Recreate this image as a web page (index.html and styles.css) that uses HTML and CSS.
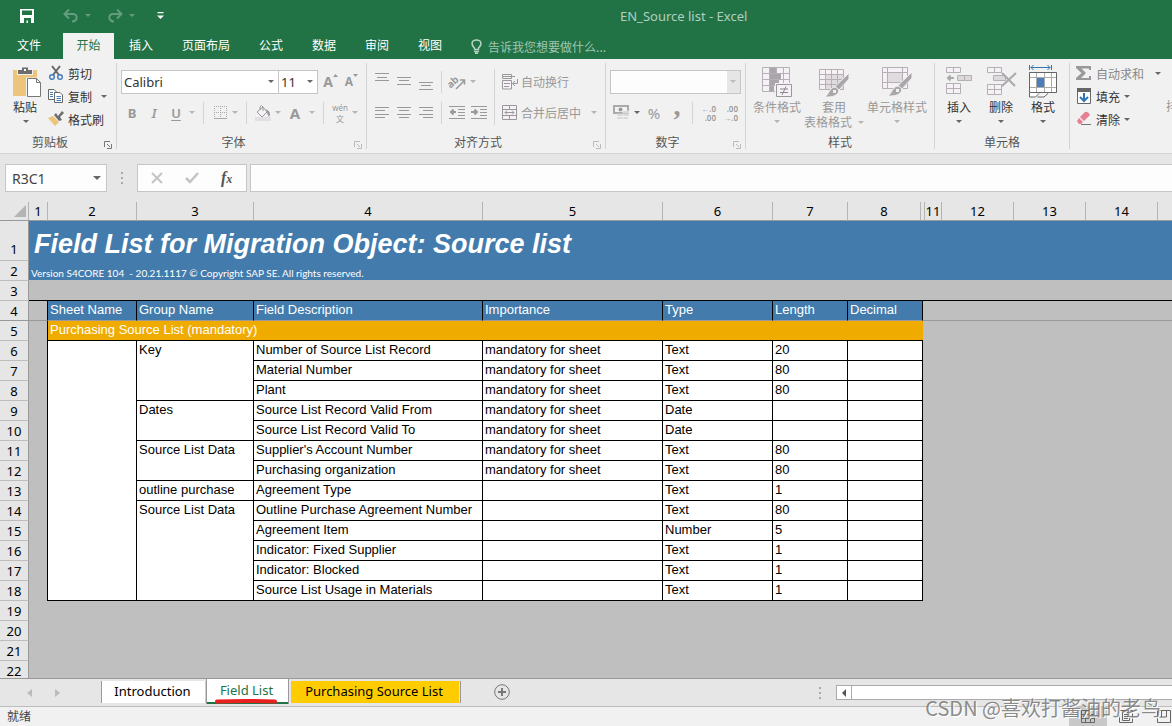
FILE: index.html
```html
<!DOCTYPE html>
<html lang="zh-CN">
<head>
<meta charset="utf-8">
<title>EN_Source list - Excel</title>
<link rel="stylesheet" href="styles.css">
</head>
<body>
<div class="app">
  <header class="top">
    <div class="titlebar">
      <div class="quick">
        <button class="qbtn" aria-label="保存"><svg width="14" height="14" viewBox="0 0 14 14"><path fill="#fff" fill-rule="evenodd" d="M0 0H14V14H0ZM2 1.500V6H12V1.500ZM4 9H11V14H8V11.500H6.500V14H4Z"/></svg></button>
        <button class="qbtn faded" aria-label="撤消"><svg width="16" height="14" viewBox="0 0 16 14" fill="none" stroke="#fff" stroke-width="2"><path d="M6 0.500L1.500 5L6 9.500M2 5H10C15 5 15 12 9 12.500"/></svg><i class="arr white"></i></button>
        <button class="qbtn faded redo" aria-label="恢复"><svg width="16" height="14" viewBox="0 0 16 14" fill="none" stroke="#fff" stroke-width="2"><path d="M10 0.500L14.500 5L10 9.500M14 5H6C1 5 1 12 7 12.500"/></svg><i class="arr white"></i></button>
        <button class="qbtn custom" aria-label="自定义快速访问工具栏"><svg width="7" height="8" viewBox="0 0 7 8"><path fill="#fff" d="M0.500 0H6.500V1.300H0.500ZM0 3.500H7L3.500 7Z"/></svg></button>
      </div>
      <div class="doc">EN_Source list - Excel</div>
    </div>
    <nav class="tabs">
      <button class="tab file">文件</button><button class="tab on">开始</button><button class="tab">插入</button><button class="tab">页面布局</button><button class="tab">公式</button><button class="tab">数据</button><button class="tab">审阅</button><button class="tab">视图</button>
      <button class="tell"><svg width="11" height="15" viewBox="0 0 11 15" fill="none" stroke="#b5d3c1" stroke-width="1.500"><path d="M3.500 10.500V9C0 6 0 1 5.500 1S11 6 7.500 9V10.500Z"/><path d="M3 12.500H8M4 14.200H7"/></svg>告诉我您想要做什么...</button>
    </nav>
  </header>

  <section class="ribbon">
    <div class="group clip">
      <div class="gbody">
        <button class="big paste"><svg width="29" height="31" viewBox="0 0 29 31"><path fill="#ecc47c" d="M0 3H24V29H0Z"/><path fill="#f1f1f1" d="M4 3H20V8H4Z"/><path fill="#6d6d6d" d="M5 3H9V0.500H15V3H19V7H5Z"/><path fill="#fff" d="M11 2H13V4H11Z"/><path fill="#fff" stroke="#f1f1f1" stroke-width="3" d="M14.500 12H23L27.500 16.500V30H14.500Z"/><path fill="#fff" stroke="#777" d="M14.500 11.500H23.500L27.500 15.500V29.500H14.500ZM23.500 11.500V15.500H27.500"/></svg><span>粘贴</span><i class="arr"></i></button>
        <div class="stack">
          <button class="line"><svg width="16" height="16" viewBox="0 0 16 16" fill="none"><path stroke="#666" stroke-width="2" d="M4 1L11 10M12 1L5 10"/><circle cx="4" cy="12" r="2.300" stroke="#4a7ebb" stroke-width="1.500"/><circle cx="12" cy="12" r="2.300" stroke="#4a7ebb" stroke-width="1.500"/></svg>剪切</button>
          <button class="line"><svg width="16" height="16" viewBox="0 0 16 16" fill="#fff" stroke="#666"><path d="M0.500 1.500H6L8.500 4V11.500H0.500Z"/><path d="M6.500 4.500H12L14.500 7V14.500H6.500Z"/><path stroke="#4a7ebb" d="M2 4.500H5M2 6.500H5M2 8.500H5M8.500 8.500H13M8.500 10.500H13M8.500 12.500H13"/></svg>复制<i class="arr wide"></i></button>
          <button class="line"><svg width="16" height="16" viewBox="0 0 16 16"><path fill="#ecc47c" d="M0 7L5 5L11 11L7 15Z"/><path fill="#6d6d6d" d="M6 4L8 2L10 5L14 0L16 2L12 6L14 9L11 10Z"/></svg>格式刷</button>
        </div>
      </div>
      <div class="glabel">剪贴板<svg class="launch dark" width="8" height="8" viewBox="0 0 8 8"><path d="M0.500 6V0.500H6M3 3L6 6M7.500 3V7.500H3" fill="none" stroke="currentColor"/></svg></div>
    </div>

    <div class="group font">
      <div class="gbody rows">
        <div class="row"><span class="combo w158"><select aria-label="字体"><option>Calibri</option></select><i class="arr"></i></span><span class="combo w40"><select aria-label="字号"><option>11</option></select><i class="arr"></i></span><button class="slot grow" aria-label="增大字号"><b>A</b><svg width="5" height="3" viewBox="0 0 5 3"><path fill="#999" d="M0 3L2.500 0L5 3Z"/></svg></button><button class="slot shrink" aria-label="减小字号"><b>A</b><svg width="5" height="3" viewBox="0 0 5 3"><path fill="#999" d="M0 0H5L2.500 3Z"/></svg></button></div>
        <div class="row dim"><button class="slot s22"><b>B</b></button><button class="slot s22"><em>I</em></button><button class="slot s22"><u>U</u></button><i class="arr cell"></i><span class="sep"></span><button class="slot s20" aria-label="边框"><svg width="13" height="13" viewBox="0 0 13 13" stroke="#aaa"><path stroke-dasharray="1 1" d="M0 0.500H13M0 6.500H13M0.500 0V12M6.500 0V12M12.500 0V12"/><path d="M0 12.500H13"/></svg></button><i class="arr cell"></i><span class="sep"></span><button class="slot s20" aria-label="填充颜色"><svg width="16" height="16" viewBox="0 0 16 16"><path fill="#e4dfe4" d="M0 12H16V16H0Z"/><path fill="#f6f1f6" stroke="#999" d="M2 7L8 2L12 7L7 12Z"/><path fill="none" stroke="#999" d="M5 5V2Q6.500-1 8 2V6"/><path fill="#999" d="M11 4Q17 7 14 12Q12 9 12 7Z"/></svg></button><i class="arr cell"></i><button class="slot s24 fc"><b>A</b></button><i class="arr cell"></i><span class="sep"></span><button class="slot s20 pinyin"><span>wén</span><span>文</span></button><i class="arr cell"></i></div>
      </div>
      <div class="glabel">字体<svg class="launch" width="8" height="8" viewBox="0 0 8 8"><path d="M0.500 6V0.500H6M3 3L6 6M7.500 3V7.500H3" fill="none" stroke="currentColor"/></svg></div>
    </div>

    <div class="group align">
      <div class="gbody">
        <div class="rows">
          <div class="row dim"><button class="slot s22" aria-label="顶端对齐"><svg width="14" height="18" viewBox="0 0 14 18" stroke="#999"><path d="M0 0.500H14M2 4.500H12M0 7.500H14"/></svg></button><button class="slot s22" aria-label="垂直居中"><svg width="14" height="18" viewBox="0 0 14 18" stroke="#999"><path d="M0 4.500H14M2 7.500H12M0 11.500H14"/></svg></button><button class="slot s22" aria-label="底端对齐"><svg width="14" height="18" viewBox="0 0 14 18" stroke="#999"><path d="M0 9.500H14M2 12.500H12M0 16.500H14"/></svg></button><span class="sep near"></span><button class="slot s22" aria-label="方向"><svg width="17" height="16" viewBox="0 0 17 16"><text class="abtext" x="-2" y="10" transform="rotate(-42 6 8)">ab</text><path fill="none" stroke="#999" stroke-width="1.500" d="M7 15L15 7M11 6H15.500V10.500"/></svg></button><i class="arr cell"></i></div>
          <div class="row dim"><button class="slot s22" aria-label="左对齐"><svg width="14" height="12" viewBox="0 0 14 12" stroke="#999"><path d="M0 0.500H14M0 3.500H10M0 7.500H14M0 10.500H10"/></svg></button><button class="slot s22" aria-label="居中"><svg width="14" height="12" viewBox="0 0 14 12" stroke="#999"><path d="M0 0.500H14M2 3.500H12M0 7.500H14M2 10.500H12"/></svg></button><button class="slot s22" aria-label="右对齐"><svg width="14" height="12" viewBox="0 0 14 12" stroke="#999"><path d="M0 0.500H14M4 3.500H14M0 7.500H14M4 10.500H14"/></svg></button><span class="sep near"></span><button class="slot s22" aria-label="减少缩进量"><svg width="16" height="14" viewBox="0 0 16 14" fill="none" stroke="#999"><path d="M0 0.500H16M9 3.500H16M9 6.500H16M9 9.500H16M0 12.500H16"/><path stroke-width="2" d="M7 6H2M4.500 3.500L2 6L4.500 8.500"/></svg></button><button class="slot s22" aria-label="增加缩进量"><svg width="16" height="14" viewBox="0 0 16 14" fill="none" stroke="#999"><path d="M0 0.500H16M9 3.500H16M9 6.500H16M9 9.500H16M0 12.500H16"/><path stroke-width="2" d="M0 6H6M3.500 3.500L6 6L3.500 8.500"/></svg></button></div>
        </div>
        <span class="sep tall"></span>
        <div class="rows">
          <div class="row dim"><button class="line"><svg width="16" height="16" viewBox="0 0 16 16" fill="#f6f1f6" stroke="#999"><path d="M0.500 0.500H9.500V4.500H0.500ZM0.500 6.500H9.500V15H0.500ZM0 2.500H13M2 9.500H8M2 12.500H7"/><path fill="none" d="M15.500 5V9.500H11M13 7L10.500 9.500L13 12"/></svg>自动换行</button></div>
          <div class="row dim"><button class="line"><svg width="16" height="16" viewBox="0 0 16 16" fill="#f6f1f6" stroke="#999"><path d="M0.500 0.500H14.500V14.500H0.500ZM0.500 4.500H14.500M0.500 10.500H14.500M7.500 0V4M7.500 11V15"/><path fill="none" d="M3 7.500H12M5 5.500L3 7.500L5 9.500M10 5.500L12 7.500L10 9.500"/></svg>合并后居中<i class="arr wide far"></i></button></div>
        </div>
      </div>
      <div class="glabel">对齐方式<svg class="launch" width="8" height="8" viewBox="0 0 8 8"><path d="M0.500 6V0.500H6M3 3L6 6M7.500 3V7.500H3" fill="none" stroke="currentColor"/></svg></div>
    </div>

    <div class="group number">
      <div class="gbody rows">
        <div class="row"><span class="combo w131 off"><select aria-label="数字格式"><option></option></select><i class="arr"></i></span></div>
        <div class="row dim"><button class="slot s22" aria-label="会计数字格式"><svg width="16" height="16" viewBox="0 0 16 16"><path fill="#f6f1f6" stroke="#aaa" stroke-width="2" d="M1 1H15V8H1Z"/><circle cx="7.500" cy="4.500" r="2" fill="#999"/><path fill="#d4d0d4" stroke="#f1f1f1" stroke-width=".5" d="M10 6H16V8H10ZM10 9H16V11H10ZM4 9H10V11H4ZM4 12H10V14H4ZM10 12H15V14H10Z"/></svg></button><i class="arr cell deep"></i><button class="slot s24 pct">%</button><button class="slot s22 comma">,</button><span class="sep near"></span><button class="slot s22 dec"><span>←.0</span><span>.00</span></button><button class="slot s22 dec"><span>.00</span><span>→.0</span></button></div>
      </div>
      <div class="glabel">数字<svg class="launch" width="8" height="8" viewBox="0 0 8 8"><path d="M0.500 6V0.500H6M3 3L6 6M7.500 3V7.500H3" fill="none" stroke="currentColor"/></svg></div>
    </div>

    <div class="group styles">
      <div class="gbody dim">
        <button class="big w54"><svg width="30" height="31" viewBox="0 0 30 31" fill="#f6f1f6" stroke="#b4b0b4"><path d="M0.500 0.500H27.500V24.500H0.500ZM0.500 6.500H27.500M0.500 12.500H27.500M0.500 18.500H27.500M7.500 0V25M14.500 0V25M21.500 0V25"/><path fill="#aaa5aa" stroke="none" d="M8 1H14V6H8ZM8 7H19V12H8ZM8 13H17V18H8ZM8 19H12V24H8Z"/><path stroke="#f1f1f1" stroke-width="3" d="M14.500 17.500H29.500V29.500H14.500Z"/><path stroke="#999" d="M14.500 17.500H29.500V29.500H14.500Z"/><path stroke="#888" d="M18 22H26M18 25.500H26M24 19.500L20 28"/></svg><span>条件格式</span><i class="arr"></i></button>
        <button class="big w60"><svg width="30" height="31" viewBox="0 0 30 31" fill="#f6f1f6" stroke="#b4b0b4"><path d="M0.500 2.500H24.500V22.500H0.500Z"/><path fill="#dfdbdf" d="M6.500 7.500H24.500V22.500H6.500Z"/><path d="M0.500 7.500H24.500M0.500 12.500H24.500M0.500 17.500H24.500M6.500 2V22M12.500 2V22M18.500 2V22"/><path fill="#aaa6aa" stroke="#f1f1f1" d="M30 6V12L20 23L16 19.500Z"/><path fill="#aaa6aa" stroke="#f1f1f1" d="M15 20C18 20 21 23 19 26C16 30 11 30 6 30C10 27 10 22 15 20Z"/><path fill="#f1f1f1" stroke="none" d="M14 23H17V26H14Z"/></svg><span>套用<br>表格格式<i class="arr inline"></i></span></button>
        <button class="big w64"><svg width="30" height="31" viewBox="0 0 30 31" fill="#f6f1f6" stroke="#b4b0b4"><path d="M0.500 0.500H25.500V21.500H0.500ZM0.500 5.500H25.500M0.500 15.500H25.500M5.500 0V22M20.500 0V22"/><path fill="#dfdbdf" d="M5.500 5.500H20.500V15.500H5.500Z"/><path fill="#aaa6aa" stroke="#f1f1f1" d="M30 5V11L20 22L16 18.500Z"/><path fill="#aaa6aa" stroke="#f1f1f1" d="M15 19C18 19 21 22 19 25C16 29 11 29 6 29C10 26 10 21 15 19Z"/><path fill="#f1f1f1" stroke="none" d="M14 22H17V25H14Z"/></svg><span>单元格样式</span><i class="arr"></i></button>
      </div>
      <div class="glabel">样式</div>
    </div>

    <div class="group cells">
      <div class="gbody">
        <button class="big w42"><svg width="26" height="31" viewBox="0 0 26 31" fill="#f6f1f6" stroke="#b4b0b4"><path d="M0.500 0.500H14.500V5.500H0.500ZM7.500 0V6M0.500 16.500H14.500V26.500H0.500ZM0.500 21.500H14.500M7.500 16V27"/><path fill="#dcd8dc" d="M11.500 8.500H25.500V13.500H11.500ZM18.500 8V14"/><path fill="none" stroke="#aaa" stroke-width="2" d="M8 11H2M4.500 8.500L2 11L4.500 13.500"/></svg><span>插入</span><i class="arr"></i></button>
        <button class="big w42"><svg width="28" height="31" viewBox="0 0 28 31" fill="#f6f1f6" stroke="#b4b0b4"><path d="M0.500 0.500H14.500V5.500H0.500ZM7.500 0V6M0.500 17.500H14.500V27.500H0.500ZM0.500 22.500H14.500M7.500 17V28"/><path fill="#dcd8dc" d="M6.500 8.500H18.500V13.500H6.500Z"/><path fill="none" stroke="#aaa" stroke-width="2" d="M15 6L28 19M29 6L15 19"/></svg><span>删除</span><i class="arr"></i></button>
        <button class="big w42"><svg width="28" height="31" viewBox="0 0 28 31" fill="#fff" stroke="#aaa"><path stroke="#666" d="M0.500 26V30H6.500L10 26.500M8.500 30H15L19 26.500"/><path d="M0.500 5.500H27.500V25.500H0.500ZM0.500 10.500H27.500M0.500 20.500H27.500M7.500 6V26M15.500 6V26M22.500 6V26"/><path fill="none" stroke="#666" d="M0.500 5.500H27.500V25.500H0.500Z"/><path fill="#4a7ebb" stroke="none" d="M8 11H15V20H8Z"/><path fill="none" stroke="#2e75b6" d="M0.500 -2V3M22.500 -2V3M2 0.500H21M4.500 -2L2 0.500L4.500 3M18.500 -2L21 0.500L18.500 3"/></svg><span>格式</span><i class="arr"></i></button>
      </div>
      <div class="glabel">单元格</div>
    </div>

    <div class="group edit">
      <div class="gbody">
        <div class="stack">
          <button class="line soft"><svg width="16" height="16" viewBox="0 0 16 16"><path fill="#999" d="M0 1H15V5H13V3.500H5.500L10 8L5 13H13V11H15V15H0V13L5.500 8L0 3Z"/></svg>自动求和<i class="arr wide far"></i></button>
          <button class="line"><svg width="16" height="16" viewBox="0 0 16 16"><path fill="#fff" stroke="#666" d="M1.500 1.500H14.500V15.500H1.500Z"/><path fill="#666" d="M1 0H15V4H1Z"/><path fill="none" stroke="#2e75b6" stroke-width="2" d="M8 5V13M4 9L8 13L12 9"/></svg>填充<i class="arr"></i></button>
          <button class="line"><svg width="16" height="16" viewBox="0 0 16 16"><path fill="#e67f92" d="M4 6L9 1Q12 0 14 4L8 10Z"/><path fill="#e67f92" d="M3 7L7 11L5 13H3L1 10Z"/><path stroke="#777" d="M5 13.500H15"/></svg>清除<i class="arr"></i></button>
        </div>
        <span class="sort">排序</span>
      </div>
    </div>
  </section>

  <section class="fbar">
    <div class="namebox"><input class="ninput" aria-label="名称框" value="R3C1"><i class="arr"></i></div>
    <span class="dots"></span>
    <div class="fbtns">
      <button aria-label="取消"><svg width="12" height="12" viewBox="0 0 12 12" stroke="#c4c4c4" stroke-width="2"><path d="M1 1L11 11M11 1L1 11"/></svg></button>
      <button aria-label="输入"><svg width="14" height="12" viewBox="0 0 14 12" fill="none" stroke="#c4c4c4" stroke-width="2.500"><path d="M1 6L5 10L13 1"/></svg></button>
      <button class="fx" aria-label="插入函数">f<small>x</small></button>
    </div>
    <input class="formula" aria-label="编辑栏">
  </section>

  <main class="sheet">
    <table>
      <colgroup><col class="c0"><col class="c1"><col class="c2"><col class="c3"><col class="c4"><col class="c5"><col class="c6"><col class="c7"><col class="c8"><col class="thin"><col class="thin"><col class="c11"><col class="c12"><col class="c12"><col class="c12"><col></colgroup>
      <thead><tr><th class="corner"><svg width="12" height="12" viewBox="0 0 12 12"><path fill="#b4b4b4" d="M12 0V12H0Z"/></svg></th><th>1</th><th>2</th><th>3</th><th>4</th><th>5</th><th>6</th><th>7</th><th>8</th><th colspan="2"></th><th>11</th><th>12</th><th>13</th><th>14</th><th class="last"></th></tr></thead>
      <tbody>
        <tr class="r1"><th>1</th><td class="blue title" colspan="15">Field List for Migration Object: Source list</td></tr>
        <tr><th>2</th><td class="blue version" colspan="15">Version S4CORE 104&nbsp; - 20.21.1117 © Copyright SAP SE. All rights reserved.</td></tr>
        <tr><th>3</th><td class="under" colspan="15"></td></tr>
        <tr class="heads"><th>4</th><td class="edge"></td><td class="h">Sheet Name</td><td class="h">Group Name</td><td class="h">Field Description</td><td class="h">Importance</td><td class="h">Type</td><td class="h">Length</td><td class="h" colspan="2">Decimal</td><td class="frost" colspan="6"></td></tr>
        <tr><th>5</th><td class="edge"></td><td class="gold" colspan="8">Purchasing Source List (mandatory)</td><td colspan="6"></td></tr>
        <tr><th>6</th><td class="edge"></td><td class="d" rowspan="13"></td><td class="d" rowspan="3">Key</td><td class="d">Number of Source List Record</td><td class="d">mandatory for sheet</td><td class="d">Text</td><td class="d">20</td><td class="d" colspan="2"></td><td colspan="6"></td></tr>
        <tr><th>7</th><td class="edge"></td><td class="d">Material Number</td><td class="d">mandatory for sheet</td><td class="d">Text</td><td class="d">80</td><td class="d" colspan="2"></td><td colspan="6"></td></tr>
        <tr><th>8</th><td class="edge"></td><td class="d">Plant</td><td class="d">mandatory for sheet</td><td class="d">Text</td><td class="d">80</td><td class="d" colspan="2"></td><td colspan="6"></td></tr>
        <tr><th>9</th><td class="edge"></td><td class="d" rowspan="2">Dates</td><td class="d">Source List Record Valid From</td><td class="d">mandatory for sheet</td><td class="d">Date</td><td class="d"></td><td class="d" colspan="2"></td><td colspan="6"></td></tr>
        <tr><th>10</th><td class="edge"></td><td class="d">Source List Record Valid To</td><td class="d">mandatory for sheet</td><td class="d">Date</td><td class="d"></td><td class="d" colspan="2"></td><td colspan="6"></td></tr>
        <tr><th>11</th><td class="edge"></td><td class="d" rowspan="2">Source List Data</td><td class="d">Supplier's Account Number</td><td class="d">mandatory for sheet</td><td class="d">Text</td><td class="d">80</td><td class="d" colspan="2"></td><td colspan="6"></td></tr>
        <tr><th>12</th><td class="edge"></td><td class="d">Purchasing organization</td><td class="d">mandatory for sheet</td><td class="d">Text</td><td class="d">80</td><td class="d" colspan="2"></td><td colspan="6"></td></tr>
        <tr><th>13</th><td class="edge"></td><td class="d">outline purchase</td><td class="d">Agreement Type</td><td class="d"></td><td class="d">Text</td><td class="d">1</td><td class="d" colspan="2"></td><td colspan="6"></td></tr>
        <tr><th>14</th><td class="edge"></td><td class="d" rowspan="5">Source List Data</td><td class="d">Outline Purchase Agreement Number</td><td class="d"></td><td class="d">Text</td><td class="d">80</td><td class="d" colspan="2"></td><td colspan="6"></td></tr>
        <tr><th>15</th><td class="edge"></td><td class="d">Agreement Item</td><td class="d"></td><td class="d">Number</td><td class="d">5</td><td class="d" colspan="2"></td><td colspan="6"></td></tr>
        <tr><th>16</th><td class="edge"></td><td class="d">Indicator: Fixed Supplier</td><td class="d"></td><td class="d">Text</td><td class="d">1</td><td class="d" colspan="2"></td><td colspan="6"></td></tr>
        <tr><th>17</th><td class="edge"></td><td class="d">Indicator: Blocked</td><td class="d"></td><td class="d">Text</td><td class="d">1</td><td class="d" colspan="2"></td><td colspan="6"></td></tr>
        <tr><th>18</th><td class="edge"></td><td class="d">Source List Usage in Materials</td><td class="d"></td><td class="d">Text</td><td class="d">1</td><td class="d" colspan="2"></td><td colspan="6"></td></tr>
        <tr><th>19</th><td colspan="15"></td></tr>
        <tr><th>20</th><td colspan="15"></td></tr>
        <tr><th>21</th><td colspan="15"></td></tr>
        <tr><th>22</th><td colspan="15"></td></tr>
      </tbody>
    </table>
  </main>

  <nav class="sheets">
    <div class="arrows"><button aria-label="上一张"><svg width="5" height="8" viewBox="0 0 5 8"><path fill="#bbb" d="M5 0V8L0 4Z"/></svg></button><button aria-label="下一张"><svg width="5" height="8" viewBox="0 0 5 8"><path fill="#bbb" d="M0 0V8L5 4Z"/></svg></button></div>
    <button class="stab intro">Introduction</button><button class="stab active">Field List<svg class="mark" width="64" height="5" viewBox="0 0 64 5"><path d="M2 2.500Q30 1.500 60 2.500" fill="none" stroke="#ea2020" stroke-width="4" stroke-linecap="round"/></svg></button><button class="stab yellow">Purchasing Source List</button><span class="tabend"></span>
    <button class="add" aria-label="新工作表"><svg width="16" height="16" viewBox="0 0 16 16" fill="none" stroke="#777"><circle cx="8" cy="8" r="7.300"/><path stroke-width="2" d="M8 4V12M4 8H12"/></svg></button>
    <span class="dots end"></span>
    <div class="scroll"><button aria-label="向左滚动"><svg width="4" height="8" viewBox="0 0 4 8"><path fill="#555" d="M4 0V8L0 4Z"/></svg></button><span class="thumb"></span></div>
  </nav>

  <footer class="status">
    <span class="ready">就绪</span>
    <div class="views">
      <button class="sel" aria-label="普通"><svg width="14" height="13" viewBox="0 0 14 13" fill="none" stroke="#666"><path d="M0.500 0.500H13.500V12.500H0.500ZM0 4.500H14M0 8.500H14M4.500 0V13M9.500 0V13"/></svg></button>
      <button aria-label="页面布局"><svg width="14" height="13" viewBox="0 0 14 13" fill="none" stroke="#666"><path d="M0.500 0.500H13.500V12.500H0.500ZM3.500 2.500H10.500V10.500H3.500ZM5 4.500H9M5 6.500H9M5 8.500H9"/></svg></button>
      <button aria-label="分页预览"><svg width="14" height="13" viewBox="0 0 14 13" fill="none" stroke="#666"><path d="M0.500 0.500H13.500V12.500H0.500ZM4.500 0V7H9.500V0M0 7H5"/></svg></button>
    </div>
  </footer>
  <div class="watermark">CSDN @喜欢打酱油的老鸟</div>
</div>
</body>
</html>
```

FILE: styles.css
```css
* { box-sizing: border-box; }
body { margin: 0; font-family: "Noto Sans", "Noto Sans CJK SC", sans-serif; font-size: 12px; color: #333; background: #f1f1f1; }
button { border: 0; padding: 0; background: none; font: inherit; color: inherit; white-space: nowrap; }
svg { display: block; flex: none; overflow: visible; }
.app { position: relative; display: flex; flex-direction: column; height: 100vh; overflow: hidden; }

.arr { width: 0; height: 0; border: 3px solid transparent; border-top-color: #666; border-bottom: 0; flex: none; display: block; }
.arr.white { border-top-color: #fff; }
.arr.cell { margin: 0 2px; }
.dim .arr { border-top-color: #b5b5b5; }
.dim .arr.deep { border-top-color: #666; }
.arr.inline { display: inline-block; margin: 0 0 3px 6px; }

.top { background: #217346; color: #fff; flex: none; }
.titlebar { display: flex; align-items: center; height: 31px; }
.quick { display: flex; align-items: center; padding-left: 20px; width: 620px; }
.qbtn { display: flex; align-items: center; gap: 6px; }
.qbtn.faded { opacity: .3; margin-left: 29px; }
.qbtn.redo { margin-left: 16px; }
.qbtn.custom { margin-left: 22px; }
.doc { color: #b0cfbe; font-size: 13px; line-height: 18px; }
.tabs { display: flex; height: 28px; padding: 2px 0 0 3px; }
.tab { padding: 0 14px 2px; font: 12px/22px "Noto Sans CJK SC", sans-serif; }
.tab + .tab { margin-left: 1px; }
.tab.file { width: 52px; margin-right: 7px; }
.tab.on { background: #f1f1f1; color: #217346; width: 51px; padding: 0 0 2px; }
.tell { display: flex; align-items: center; gap: 6px; margin-left: 15px; color: #a0c5b0; font-family: "Noto Sans CJK SC", sans-serif; }

.ribbon { display: flex; flex: none; height: 95px; background: #f1f1f1; border-bottom: 1px solid #d2d2d2; padding: 4px 0; overflow: hidden; font-family: "Noto Sans CJK SC", sans-serif; }
.group { display: flex; flex-direction: column; justify-content: space-between; flex: none; padding: 0 4px; border-right: 1px solid #d4d4d4; }
.clip { width: 117px; }
.font { width: 250px; }
.align { width: 239px; }
.number { width: 140px; }
.styles { width: 189px; }
.cells { width: 135px; padding: 0 3px; }
.edit { flex: 1 0 102px; border: 0; }
.gbody { display: flex; color: #333; }
.glabel { position: relative; text-align: center; font-size: 12px; line-height: 14px; color: #555; padding-right: 16px; }
.styles .glabel, .cells .glabel { padding: 0; }
.launch { position: absolute; right: 0; bottom: 0; color: #bbb; }
.launch.dark { color: #777; }
.rows { display: flex; flex-direction: column; gap: 6px; padding-top: 6px; }
.row { display: flex; align-items: center; height: 25px; }
.gbody.dim, .dim, .dim .line { color: #999; }
.slot { display: flex; align-items: center; justify-content: center; height: 24px; font-family: "Noto Sans", sans-serif; font-size: 13px; }
.slot em, .slot u { font-weight: 600; text-underline-offset: 2px; }
.s20 { width: 20px; }
.s22 { width: 22px; }
.s24 { width: 24px; }
.fc { font-size: 15px; }
.sep { width: 1px; height: 22px; background: #d4d4d4; margin: 0 6px; flex: none; }
.sep.near { margin: 0 4px; }
.sep.tall { height: 56px; margin: 6px 4px 0; }
.combo { position: relative; display: flex; flex: none; height: 24px; border: 1px solid #c6c6c6; background: #fff; }
.combo + .combo { margin-left: -1px; }
.combo select { appearance: none; border: 0; outline: 0; width: 100%; background: none; padding: 0 2px; font: 13px "Noto Sans", sans-serif; color: #333; }
.combo .arr { position: absolute; right: 4px; top: 9px; }
.combo.off .arr { border-top-color: #bbb; }
.combo.off { background: linear-gradient(to left, #e6e6e6 13px, #fdfdfd 13px); }
.w158 { width: 158px; }
.w40 { width: 40px; }
.w131 { width: 131px; }
.grow, .shrink { color: #999; width: 22px; font-size: 14px; }
.grow { margin-left: 2px; }
.grow svg, .shrink svg { margin-bottom: 12px; }
.shrink { font-size: 12px; }
.pinyin { flex-direction: column; font-size: 8px; line-height: 11px; }
.pinyin span + span { font-family: "Noto Sans CJK SC", sans-serif; }
.pct { font-size: 15px; }
.comma { font: 700 28px/24px "Liberation Serif", serif; padding-bottom: 14px; }
.dec { flex-direction: column; align-items: flex-end; padding-right: 3px; font-size: 8px; line-height: 9px; font-weight: 600; }
.abtext { font: 700 10px "Noto Sans", sans-serif; fill: #999; }
.big { display: flex; flex-direction: column; align-items: center; padding-top: 4px; line-height: 15px; gap: 1px; }
.big .arr { margin-top: 5px; }
.big .arr.inline { margin-top: 0; }
.big.paste { width: 42px; align-items: flex-start; padding-left: 9px; }
.big.paste .arr { margin-left: 10px; }
.w42 { width: 42px; }
.w54 { width: 54px; }
.w60 { width: 60px; }
.w64 { width: 66px; }
.stack { display: flex; flex-direction: column; gap: 5px; padding-top: 1px; }
.line { display: flex; align-items: center; gap: 4px; height: 18px; }
.line.soft { color: #888; }
.clip .stack { margin-left: 2px; }
.line .wide { margin-left: 5px; }
.line .far { margin-left: 7px; }
.rows .line { margin-left: 3px; gap: 3px; }
.edit .stack { padding-left: 2px; }
.sort { color: #999; margin: 34px 0 0 5px; white-space: nowrap; }

.fbar { display: flex; flex: none; height: 48px; padding: 10px 0 10px 5px; background: #e6e6e6; }
.namebox, .fbtns { display: flex; align-items: center; background: #fdfdfd; border: 1px solid #c6c6c6; }
.namebox { width: 102px; padding-right: 5px; }
.namebox .arr { border-width: 4px 4px 0; }
.ninput { flex: 1; min-width: 0; border: 0; background: none; outline: 0; padding: 0 6px; font: 14px "Noto Sans", sans-serif; color: #444; }
.dots { width: 2px; margin: 8px 14px; background: repeating-linear-gradient(#aaa 0 2px, transparent 2px 5px); }
.fbtns { width: 110px; justify-content: space-around; padding: 0 2px; }
.fbtns button { width: 24px; display: flex; justify-content: center; }
.fbtns .fx { font: italic 700 16px "Liberation Serif", serif; color: #555; align-items: baseline; }
.fx small { font-size: 12px; }
.formula { flex: 1; min-width: 0; margin-left: 3px; border: 1px solid #c6c6c6; border-right: 0; background: #fdfdfd; outline: 0; }

.sheet { flex: 1; min-height: 0; overflow: hidden; background: #bfbfbf; }
.sheet table { table-layout: fixed; width: 100%; border-collapse: separate; border-spacing: 0; font: 13px/17px "Liberation Sans", Arial, sans-serif; color: #000; }
.c0 { width: 29px; } .c1 { width: 19px; } .c2 { width: 89px; } .c3 { width: 117px; } .c4 { width: 229px; } .c5 { width: 180px; } .c6 { width: 110px; } .c7 { width: 75px; } .c8 { width: 73px; } .thin { width: 2px; } .c11 { width: 17px; } .c12 { width: 72px; }
.sheet tr { height: 20px; }
.sheet th { font: 13px/17px "Noto Sans", sans-serif; color: #000; background: #e6e6e6; padding: 0; text-align: center; vertical-align: bottom; white-space: nowrap; }
.sheet thead tr { height: 19px; }
.sheet thead th { border-right: 1px solid #b4b4b4; border-bottom: 1px solid #999; }
.sheet thead .last { border-right: 0; }
.sheet thead .corner { padding: 0 3px 3px 14px; }
.sheet tbody th { border-right: 1px solid #999; border-bottom: 1px solid #bdbdbd; }
.sheet .r1 { height: 40px; }
.sheet .r1 th { padding-bottom: 2px; }
.sheet td { padding: 0 2px; vertical-align: top; white-space: nowrap; overflow: hidden; }
.sheet .blue { background: #427bac; color: #fff; }
.sheet .title { font-size: 27px; font-weight: 700; font-style: italic; padding: 6px 5px 0; line-height: 34px; }
.sheet .version { font: 10px/14px Lato, sans-serif; vertical-align: bottom; border-bottom: 1px solid #bfbfbf; }
.sheet .under { border-bottom: 1px solid #000; }
.sheet .edge { border-right: 1px solid #000; }
.sheet .heads th, .sheet .frost, .sheet .heads .edge { border-bottom: 1px solid #999; }
.sheet .h { background: #427bac; color: #fff; border-right: 1px solid #000; border-bottom: 1px solid #999; }
.sheet .gold { background: #f0ab00; color: #fff; border-bottom: 1px solid #000; }
.sheet .d { background: #fff; border-right: 1px solid #000; border-bottom: 1px solid #000; }

.sheets { display: flex; flex: none; height: 29px; background: #e6e6e6; border-top: 1px solid #999; border-bottom: 1px solid #bdbdbd; font: 13px "Noto Sans", sans-serif; color: #000; }
.arrows { display: flex; align-items: center; gap: 23px; width: 101px; padding-left: 27px; }
.stab { height: 22px; margin-top: 2px; line-height: 18px; padding: 0 2px 3px 0; }
.stab.intro { width: 105px; background: #fff; border-left: 1px solid #999; border-right: 1px solid #ccc; }
.stab.active { position: relative; width: 83px; height: 25px; margin-top: 0; background: #fff; color: #217346; border: solid #999; border-width: 0 1px; box-shadow: inset 0 -2px #217346; }
.mark { position: absolute; left: 8px; bottom: 0; }
.stab.yellow { width: 168px; margin-left: 2px; background: #fc0; }
.tabend { width: 1px; height: 22px; margin: 2px 0 0 1px; background: #999; }
.add { margin-left: 33px; padding-bottom: 2px; }
.dots.end { margin: 8px 15px 5px auto; }
.scroll { display: flex; width: 336px; height: 15px; margin-top: 6px; border: 1px solid #ababab; border-right: 0; background: #fff; }
.scroll button { display: flex; align-items: center; justify-content: center; width: 15px; border-right: 1px solid #ababab; }

.status { display: flex; flex: none; justify-content: space-between; height: 19px; background: #f1f1f1; }
.ready { padding-left: 7px; line-height: 18px; color: #444; font-family: "Noto Sans CJK SC", sans-serif; }
.views { display: flex; width: 103px; overflow: hidden; }
.views button { flex: none; width: 38px; display: flex; justify-content: center; align-items: center; }
.views .sel { background: #c8c8c8; }
.watermark { position: absolute; right: 11px; bottom: 4px; font: 20px/28px "Noto Sans CJK SC", sans-serif; color: rgba(110, 110, 110, .8); text-shadow: 1px 1px #fff; white-space: nowrap; }
```
